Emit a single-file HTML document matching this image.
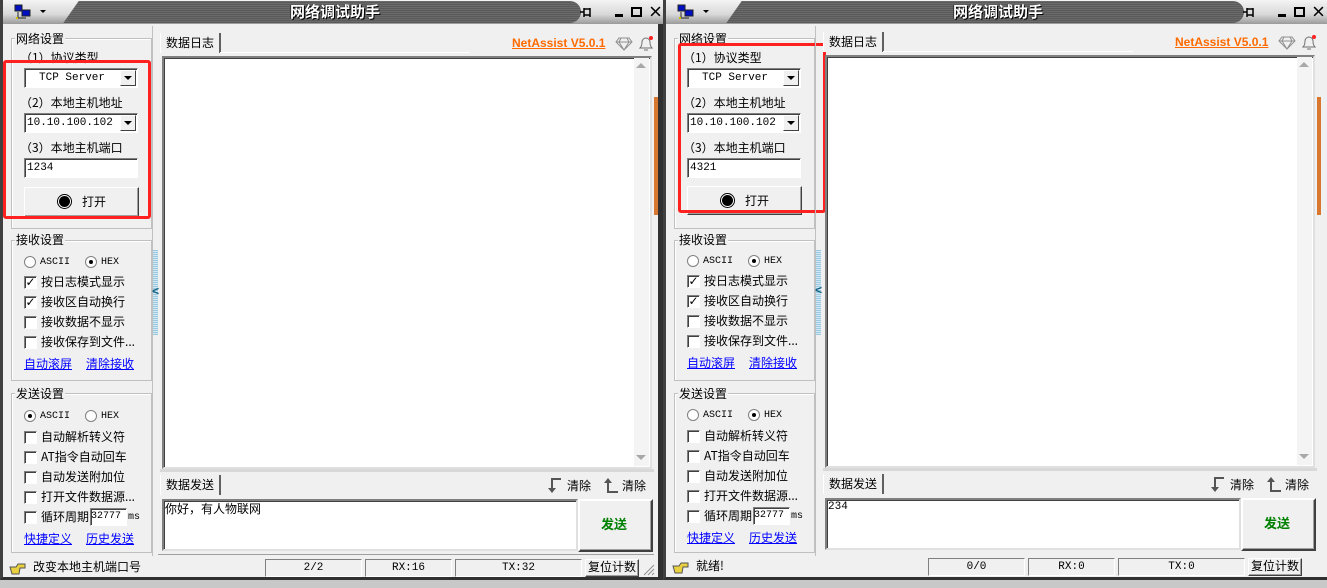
<!DOCTYPE html>
<html><head><meta charset="utf-8">
<style>
*{margin:0;padding:0;box-sizing:border-box}
body{width:1327px;height:588px;overflow:hidden;background:#c8c8c8;font-family:"Liberation Mono","Noto Sans CJK SC",monospace;font-size:12px;color:#000;position:relative}
.a{position:absolute}
.win{position:absolute;top:0;width:664px;height:588px;overflow:hidden}
.body{position:absolute;left:0;top:24px;width:664px;height:556px;background:#f0f0f0;border-left:3px solid #404040;border-right:6px solid #303030;border-bottom:3px solid #303030}
.title{position:absolute;left:0;top:0;width:664px;height:24px;background:linear-gradient(#f4f4f4,#d8d8d8 60%,#9a9a9a);border-left:3px solid #404040}
.tmid{position:absolute;left:88px;top:1px;width:490px;height:22px;border-radius:0 12px 12px 0;background:repeating-linear-gradient(#6a6a6a 0,#6a6a6a 1px,#5a5a5a 1px,#5a5a5a 2px);}
.tmid:before{content:"";position:absolute;left:-20px;top:0;width:40px;height:22px;background:inherit;transform:skewX(-35deg)}
.ttext{position:absolute;left:0;width:664px;top:2px;text-align:center;color:#fff;font-family:"Noto Sans CJK SC",sans-serif;font-weight:bold;font-size:15px;line-height:20px;text-shadow:1px 1px 0 #000,-1px 0 0 #333}
.grp{position:absolute;border:1px solid #c0c0c0;box-shadow:1px 1px 0 #fff inset}
.glab{position:absolute;background:#f0f0f0;font-family:"Noto Sans CJK SC",sans-serif;font-size:12px;line-height:14px;padding:0 1px}
.cj{font-family:"Noto Sans CJK SC",sans-serif;font-size:12px;line-height:14px;white-space:nowrap}
.combo{position:absolute;height:20px;background:#fff;border:1px solid;border-color:#808080 #fff #fff #808080;box-shadow:inset 1px 1px 0 #404040;font-size:11px;line-height:18px;white-space:nowrap}
.dd{position:absolute;right:1px;top:1px;width:16px;height:16px;background:#f0f0f0;border:1px solid;border-color:#fff #404040 #404040 #fff}
.dd:after{content:"";position:absolute;left:3px;top:5px;border:4px solid transparent;border-top:4px solid #000;border-bottom:0}
.cb{position:absolute;width:13px;height:13px;background:#fff;border:1px solid;border-color:#808080 #fff #fff #808080;box-shadow:inset 1px 1px 0 #404040;font-size:12px;line-height:11px;text-align:center;font-weight:bold;font-family:"DejaVu Sans",sans-serif}
.rd{position:absolute;width:12px;height:12px;border-radius:50%;background:#fff;border:1px solid #808080}
.rd.on:after{content:"";position:absolute;left:3px;top:3px;width:4px;height:4px;border-radius:50%;background:#000}
.lk{color:#0000ff;text-decoration:underline}
.btn{position:absolute;background:#f0f0f0;border:1px solid;border-color:#fff #404040 #404040 #fff;box-shadow:inset -1px -1px 0 #a0a0a0}
.sunk{position:absolute;border:1px solid;border-color:#808080 #fff #fff #808080;font-size:11px;text-align:center;line-height:16px}
.txt{position:absolute;background:#fff;border:2px solid;border-color:#808080 #e0e0e0 #e0e0e0 #808080;box-shadow:inset 1px 1px 0 #404040}
.tab{position:absolute;height:20px;background:#f0f0f0;border-left:1px solid #fff;border-right:2px solid #606060;padding:2px 5px;font-family:"Noto Sans CJK SC",sans-serif;font-size:12px;line-height:15px}
.red{position:absolute;border:3px solid #ff2020;border-radius:3px}
</style></head><body>

<!-- ===== LEFT WINDOW ===== -->
<div class="win" style="left:0">
<div class="title"><div class="tmid"></div>
<svg class="a" style="left:11px;top:4px" width="18" height="16"><rect x="1" y="1" width="7" height="6" fill="#0010c0" stroke="#222"/><rect x="8" y="6" width="8" height="6" fill="#0010c0" stroke="#222"/><path d="M4 8v6h8" stroke="#222" fill="none"/><rect x="2" y="13" width="2" height="2" fill="#d0c000"/></svg>
<div class="a" style="left:37px;top:10px;border:3px solid transparent;border-top:3px solid #000"></div>
<div class="ttext">网络调试助手</div>
<svg class="a" style="left:576px;top:6px" width="14" height="13"><path d="M1 6h4M5 2v9M5 3h6v6H5M11 2v9" stroke="#000" stroke-width="1.5" fill="none"/></svg>
<div class="a" style="left:612px;top:14px;width:8px;height:3px;background:#000"></div>
<div class="a" style="left:628px;top:7px;width:11px;height:10px;border:2px solid #000;border-top-width:2px"></div>
<div class="a cj" style="left:645px;top:3px;font-size:15px;font-weight:bold;line-height:18px">×</div>
</div>
<div class="body"></div>

<div class="grp" style="left:11px;top:38px;width:141px;height:191px"></div>
<div class="glab" style="left:15px;top:32px">网络设置</div>
<div class="a cj" style="left:20px;top:51px">（1）协议类型</div>
<div class="combo" style="left:24px;top:68px;width:114px"><span style="padding-left:14px">TCP Server</span><div class="dd"></div></div>
<div class="a cj" style="left:20px;top:96px">（2）本地主机地址</div>
<div class="combo" style="left:24px;top:113px;width:114px"><span style="padding-left:2px">10.10.100.102</span><div class="dd"></div></div>
<div class="a cj" style="left:20px;top:141px">（3）本地主机端口</div>
<div class="combo" style="left:24px;top:158px;width:114px"><span style="padding-left:2px">1234</span></div>
<div class="btn" style="left:24px;top:187px;width:115px;height:30px"></div>
<div class="a" style="left:57px;top:194px;width:15px;height:15px;border-radius:50%;border:1px solid #000;background:#fff"></div>
<div class="a" style="left:59px;top:196px;width:11px;height:11px;border-radius:50%;background:#000"></div>
<div class="a cj" style="left:82px;top:195px">打开</div>
<div class="red" style="left:3px;top:60px;width:148px;height:159px"></div>

<div class="grp" style="left:11px;top:240px;width:141px;height:141px"></div>
<div class="glab" style="left:15px;top:233px">接收设置</div>
<div class="rd" style="left:24px;top:256px"></div><div class="a" style="left:40px;top:257px;font-size:10px">ASCII</div>
<div class="rd on" style="left:85px;top:256px"></div><div class="a" style="left:101px;top:257px;font-size:10px">HEX</div>
<div class="cb" style="left:24px;top:276px">✓</div><div class="a cj" style="left:41px;top:275px">按日志模式显示</div>
<div class="cb" style="left:24px;top:296px">✓</div><div class="a cj" style="left:41px;top:295px">接收区自动换行</div>
<div class="cb" style="left:24px;top:316px"></div><div class="a cj" style="left:41px;top:315px">接收数据不显示</div>
<div class="cb" style="left:24px;top:336px"></div><div class="a cj" style="left:41px;top:335px">接收保存到文件...</div>
<div class="a cj lk" style="left:24px;top:357px">自动滚屏</div>
<div class="a cj lk" style="left:86px;top:357px">清除接收</div>

<div class="grp" style="left:11px;top:393px;width:141px;height:160px"></div>
<div class="glab" style="left:15px;top:387px">发送设置</div>
<div class="rd on" style="left:24px;top:410px"></div><div class="a" style="left:40px;top:411px;font-size:10px">ASCII</div>
<div class="rd" style="left:85px;top:410px"></div><div class="a" style="left:101px;top:411px;font-size:10px">HEX</div>
<div class="cb" style="left:24px;top:431px"></div><div class="a cj" style="left:41px;top:430px">自动解析转义符</div>
<div class="cb" style="left:24px;top:451px"></div><div class="a cj" style="left:41px;top:450px">AT指令自动回车</div>
<div class="cb" style="left:24px;top:471px"></div><div class="a cj" style="left:41px;top:470px">自动发送附加位</div>
<div class="cb" style="left:24px;top:491px"></div><div class="a cj" style="left:41px;top:490px">打开文件数据源...</div>
<div class="cb" style="left:24px;top:511px"></div><div class="a cj" style="left:41px;top:510px">循环周期</div>
<div class="combo" style="left:90px;top:508px;width:37px;height:18px;line-height:16px;font-size:10px">32777</div>
<div class="a" style="left:128px;top:512px;font-size:10px">ms</div>
<div class="a cj lk" style="left:24px;top:532px">快捷定义</div>
<div class="a cj lk" style="left:86px;top:532px">历史发送</div>

<div class="a" style="left:152px;top:26px;width:1px;height:530px;background:#c0c0c0"></div>
<div class="a" style="left:153px;top:250px;width:5px;height:85px;background:repeating-linear-gradient(#9cc8e0 0,#9cc8e0 1px,#d0e8f4 1px,#d0e8f4 2px)"></div>
<div class="a" style="left:152px;top:285px;font-size:12px;color:#106080;font-weight:bold">&lt;</div>

<div class="tab" style="left:160px;top:33px">数据日志</div>
<div class="a" style="left:220px;top:52px;width:250px;height:1px;background:#fff"></div>
<div class="a" style="left:512px;top:36px;color:#ff6a00;font-family:'Liberation Sans',sans-serif;font-weight:bold;font-size:12px;text-decoration:underline">NetAssist V5.0.1</div>
<svg class="a" style="left:615px;top:37px" width="18" height="14"><path d="M4 1h10l3 4-8 8-8-8z M1 5h16 M6 1l-2 4 5 8 5-8-2-4" stroke="#909090" fill="none"/></svg>
<svg class="a" style="left:637px;top:35px" width="18" height="18"><path d="M3 13c2-2 2-4 2-6a4 4 0 0 1 8 0c0 2 0 4 2 6z M7 15h4" stroke="#707070" fill="none"/><circle cx="14" cy="3" r="2" fill="#ff2020"/></svg>
<div class="txt" style="left:162px;top:56px;width:490px;height:413px"></div>
<div class="a" style="left:634px;top:58px;width:15px;height:408px;background:#f4f4f4"></div>
<div class="a" style="left:636px;top:63px;border:5px solid transparent;border-bottom:5px solid #a8a8a8;border-top:0"></div>
<div class="a" style="left:636px;top:455px;border:5px solid transparent;border-top:5px solid #a8a8a8;border-bottom:0"></div>
<div class="a" style="left:654px;top:97px;width:4px;height:118px;background:#d87830"></div>
<div class="a" style="left:160px;top:469px;width:494px;height:3px;background:#d8d8d8"></div>

<div class="tab" style="left:160px;top:475px">数据发送</div>
<svg class="a" style="left:546px;top:477px" width="18" height="18"><path d="M15 2H6v12" stroke="#555" stroke-width="2" fill="none"/><path d="M2 11h8l-4 5z" fill="#555"/></svg>
<div class="a cj" style="left:567px;top:479px">清除</div>
<svg class="a" style="left:602px;top:476px" width="18" height="18"><path d="M6 5v11h10" stroke="#555" stroke-width="2" fill="none"/><path d="M2 7h8l-4-5z" fill="#555"/></svg>
<div class="a cj" style="left:622px;top:479px">清除</div>
<div class="txt" style="left:162px;top:499px;width:416px;height:52px"></div>
<div class="a cj" style="left:165px;top:502px">你好，有人物联网</div>
<div class="btn" style="left:578px;top:499px;width:75px;height:53px;border-width:2px"></div>
<div class="a cj" style="left:601px;top:517px;color:#008000;font-weight:bold;font-size:13px">发送</div>
<div class="a" style="left:158px;top:554px;width:496px;height:1px;background:#a0a0a0"></div>

<svg class="a" style="left:9px;top:562px" width="18" height="14"><path d="M1 5h6l2-3h7v4h-5l-1 6H3z" fill="#e8d040" stroke="#555"/></svg>
<div class="a cj" style="left:33px;top:560px">改变本地主机端口号</div>
<div class="sunk" style="left:265px;top:559px;width:97px;height:18px">2/2</div>
<div class="sunk" style="left:365px;top:559px;width:87px;height:18px">RX:16</div>
<div class="sunk" style="left:455px;top:559px;width:127px;height:18px">TX:32</div>
<div class="btn" style="left:585px;top:559px;width:54px;height:18px"></div>
<div class="a cj" style="left:588px;top:560px">复位计数</div>
<svg class="a" style="left:643px;top:564px" width="12" height="12"><path d="M11 1L1 11M11 5L5 11M11 9L9 11" stroke="#909090"/></svg>
</div>

<!-- ===== RIGHT WINDOW ===== -->
<div class="win" style="left:663px">
<div class="title"><div class="tmid"></div>
<svg class="a" style="left:11px;top:4px" width="18" height="16"><rect x="1" y="1" width="7" height="6" fill="#0010c0" stroke="#222"/><rect x="8" y="6" width="8" height="6" fill="#0010c0" stroke="#222"/><path d="M4 8v6h8" stroke="#222" fill="none"/><rect x="2" y="13" width="2" height="2" fill="#d0c000"/></svg>
<div class="a" style="left:37px;top:10px;border:3px solid transparent;border-top:3px solid #000"></div>
<div class="ttext">网络调试助手</div>
<svg class="a" style="left:576px;top:6px" width="14" height="13"><path d="M1 6h4M5 2v9M5 3h6v6H5M11 2v9" stroke="#000" stroke-width="1.5" fill="none"/></svg>
<div class="a" style="left:612px;top:14px;width:8px;height:3px;background:#000"></div>
<div class="a" style="left:628px;top:7px;width:11px;height:10px;border:2px solid #000"></div>
<div class="a cj" style="left:645px;top:3px;font-size:15px;font-weight:bold;line-height:18px">×</div>
</div>
<div class="body" style="border-right:none"></div>

<div class="grp" style="left:11px;top:38px;width:141px;height:191px"></div>
<div class="glab" style="left:15px;top:32px">网络设置</div>
<div class="a cj" style="left:20px;top:51px">（1）协议类型</div>
<div class="combo" style="left:24px;top:68px;width:114px"><span style="padding-left:14px">TCP Server</span><div class="dd"></div></div>
<div class="a cj" style="left:20px;top:96px">（2）本地主机地址</div>
<div class="combo" style="left:24px;top:113px;width:114px"><span style="padding-left:2px">10.10.100.102</span><div class="dd"></div></div>
<div class="a cj" style="left:20px;top:141px">（3）本地主机端口</div>
<div class="combo" style="left:24px;top:158px;width:114px"><span style="padding-left:2px">4321</span></div>
<div class="btn" style="left:24px;top:186px;width:115px;height:29px"></div>
<div class="a" style="left:57px;top:193px;width:15px;height:15px;border-radius:50%;border:1px solid #000;background:#fff"></div>
<div class="a" style="left:59px;top:195px;width:11px;height:11px;border-radius:50%;background:#000"></div>
<div class="a cj" style="left:82px;top:194px">打开</div>
<div class="red" style="left:15px;top:43px;width:148px;height:170px"></div>

<div class="grp" style="left:11px;top:240px;width:141px;height:141px"></div>
<div class="glab" style="left:15px;top:233px">接收设置</div>
<div class="rd" style="left:24px;top:255px"></div><div class="a" style="left:40px;top:256px;font-size:10px">ASCII</div>
<div class="rd on" style="left:85px;top:255px"></div><div class="a" style="left:101px;top:256px;font-size:10px">HEX</div>
<div class="cb" style="left:24px;top:275px">✓</div><div class="a cj" style="left:41px;top:274px">按日志模式显示</div>
<div class="cb" style="left:24px;top:295px">✓</div><div class="a cj" style="left:41px;top:294px">接收区自动换行</div>
<div class="cb" style="left:24px;top:315px"></div><div class="a cj" style="left:41px;top:314px">接收数据不显示</div>
<div class="cb" style="left:24px;top:335px"></div><div class="a cj" style="left:41px;top:334px">接收保存到文件...</div>
<div class="a cj lk" style="left:24px;top:356px">自动滚屏</div>
<div class="a cj lk" style="left:86px;top:356px">清除接收</div>

<div class="grp" style="left:11px;top:393px;width:141px;height:160px"></div>
<div class="glab" style="left:15px;top:387px">发送设置</div>
<div class="rd" style="left:24px;top:409px"></div><div class="a" style="left:40px;top:410px;font-size:10px">ASCII</div>
<div class="rd on" style="left:85px;top:409px"></div><div class="a" style="left:101px;top:410px;font-size:10px">HEX</div>
<div class="cb" style="left:24px;top:430px"></div><div class="a cj" style="left:41px;top:429px">自动解析转义符</div>
<div class="cb" style="left:24px;top:450px"></div><div class="a cj" style="left:41px;top:449px">AT指令自动回车</div>
<div class="cb" style="left:24px;top:470px"></div><div class="a cj" style="left:41px;top:469px">自动发送附加位</div>
<div class="cb" style="left:24px;top:490px"></div><div class="a cj" style="left:41px;top:489px">打开文件数据源...</div>
<div class="cb" style="left:24px;top:510px"></div><div class="a cj" style="left:41px;top:509px">循环周期</div>
<div class="combo" style="left:90px;top:507px;width:37px;height:18px;line-height:16px;font-size:10px">32777</div>
<div class="a" style="left:128px;top:511px;font-size:10px">ms</div>
<div class="a cj lk" style="left:24px;top:531px">快捷定义</div>
<div class="a cj lk" style="left:86px;top:531px">历史发送</div>

<div class="a" style="left:152px;top:26px;width:1px;height:530px;background:#c0c0c0"></div>
<div class="a" style="left:153px;top:250px;width:5px;height:85px;background:repeating-linear-gradient(#9cc8e0 0,#9cc8e0 1px,#d0e8f4 1px,#d0e8f4 2px)"></div>
<div class="a" style="left:152px;top:284px;font-size:12px;color:#106080;font-weight:bold">&lt;</div>

<div class="tab" style="left:160px;top:32px">数据日志</div>
<div class="a" style="left:220px;top:51px;width:250px;height:1px;background:#fff"></div>
<div class="a" style="left:512px;top:35px;color:#ff6a00;font-family:'Liberation Sans',sans-serif;font-weight:bold;font-size:12px;text-decoration:underline">NetAssist V5.0.1</div>
<svg class="a" style="left:615px;top:36px" width="18" height="14"><path d="M4 1h10l3 4-8 8-8-8z M1 5h16 M6 1l-2 4 5 8 5-8-2-4" stroke="#909090" fill="none"/></svg>
<svg class="a" style="left:637px;top:34px" width="18" height="18"><path d="M3 13c2-2 2-4 2-6a4 4 0 0 1 8 0c0 2 0 4 2 6z M7 15h4" stroke="#707070" fill="none"/><circle cx="14" cy="3" r="2" fill="#ff2020"/></svg>
<div class="txt" style="left:162px;top:55px;width:490px;height:413px"></div>
<div class="a" style="left:634px;top:57px;width:15px;height:408px;background:#f4f4f4"></div>
<div class="a" style="left:636px;top:62px;border:5px solid transparent;border-bottom:5px solid #a8a8a8;border-top:0"></div>
<div class="a" style="left:636px;top:454px;border:5px solid transparent;border-top:5px solid #a8a8a8;border-bottom:0"></div>
<div class="a" style="left:654px;top:97px;width:4px;height:118px;background:#d87830"></div>
<div class="a" style="left:160px;top:468px;width:494px;height:3px;background:#d8d8d8"></div>

<div class="tab" style="left:160px;top:474px">数据发送</div>
<svg class="a" style="left:546px;top:476px" width="18" height="18"><path d="M15 2H6v12" stroke="#555" stroke-width="2" fill="none"/><path d="M2 11h8l-4 5z" fill="#555"/></svg>
<div class="a cj" style="left:567px;top:478px">清除</div>
<svg class="a" style="left:602px;top:475px" width="18" height="18"><path d="M6 5v11h10" stroke="#555" stroke-width="2" fill="none"/><path d="M2 7h8l-4-5z" fill="#555"/></svg>
<div class="a cj" style="left:622px;top:478px">清除</div>
<div class="txt" style="left:162px;top:498px;width:416px;height:52px"></div>
<div class="a" style="left:165px;top:501px;font-size:11px">234</div>
<div class="btn" style="left:578px;top:498px;width:75px;height:53px;border-width:2px"></div>
<div class="a cj" style="left:601px;top:516px;color:#008000;font-weight:bold;font-size:13px">发送</div>

<svg class="a" style="left:9px;top:561px" width="18" height="14"><path d="M1 5h6l2-3h7v4h-5l-1 6H3z" fill="#e8d040" stroke="#555"/></svg>
<div class="a cj" style="left:33px;top:559px">就绪!</div>
<div class="sunk" style="left:265px;top:558px;width:97px;height:18px">0/0</div>
<div class="sunk" style="left:365px;top:558px;width:87px;height:18px">RX:0</div>
<div class="sunk" style="left:455px;top:558px;width:127px;height:18px">TX:0</div>
<div class="btn" style="left:585px;top:558px;width:54px;height:18px"></div>
<div class="a cj" style="left:588px;top:559px">复位计数</div>
</div>
</body></html>
